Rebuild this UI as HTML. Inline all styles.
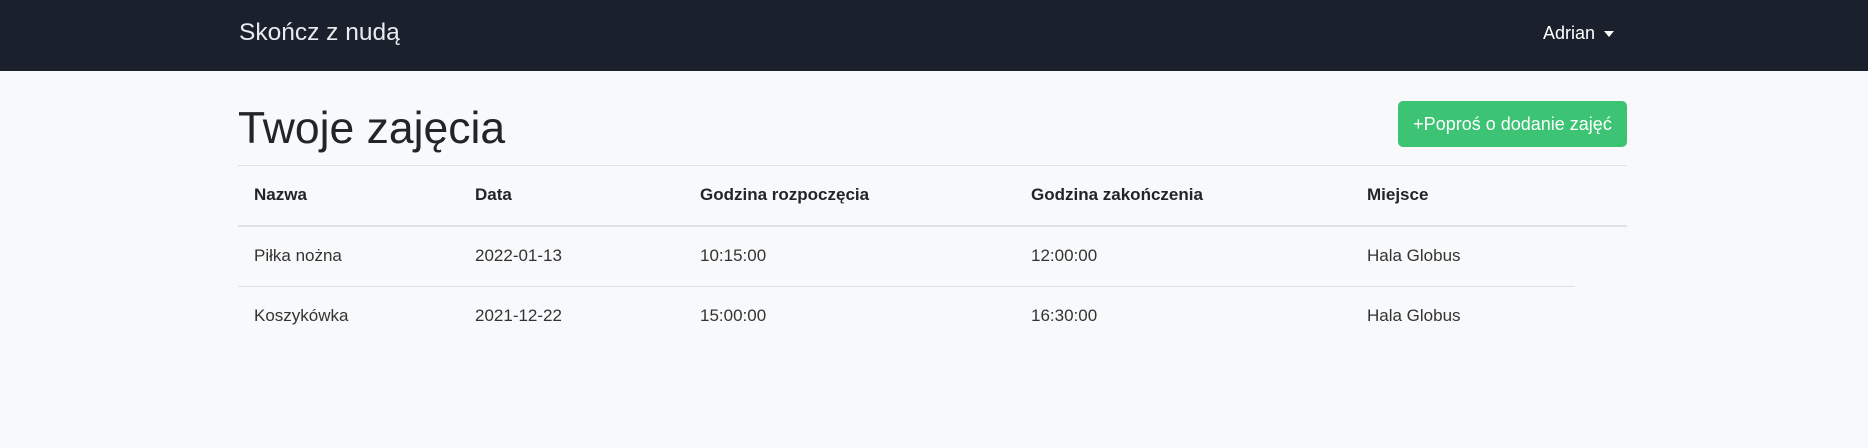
<!DOCTYPE html>
<html><head><meta charset="utf-8"><style>
*{margin:0;padding:0;box-sizing:border-box}
body{width:1868px;height:448px;background:#f8f9fa;font-family:"Liberation Sans",sans-serif;color:#212529;position:relative;overflow:hidden}
.nav{position:absolute;left:0;top:0;width:1868px;height:71px;background:#1b202d}
.t{position:absolute;white-space:nowrap;line-height:1}
.hr{position:absolute;height:1px;background:#dee2e6}
.btn{position:absolute;left:1398px;top:101px;width:229px;height:46px;background:#3cc474;border-radius:5px;color:#fff;font-size:18px;text-align:center;line-height:46px}
.th{font-weight:bold;font-size:17px;top:186px}
.r1{font-size:17px;top:247px;color:#333}
.r2{font-size:17px;top:307px;color:#333}
</style></head><body>
<div class="nav"></div>
<div class="t" style="left:239px;top:21px;font-size:24.5px;color:#e9ecef">Skończ z nudą</div>
<div class="t" style="left:1543px;top:24px;font-size:18px;color:#fff">Adrian</div>
<div style="position:absolute;left:1604px;top:31px;width:0;height:0;border-left:5px solid transparent;border-right:5px solid transparent;border-top:6px solid #fff"></div>
<div class="t" style="left:238px;top:107px;font-size:44.5px;color:#212529">Twoje zajęcia</div>
<div class="btn">+Poproś o dodanie zajęć</div>
<div class="hr" style="left:238px;top:165px;width:1389px"></div>
<div class="t th" style="left:254px">Nazwa</div>
<div class="t th" style="left:475px">Data</div>
<div class="t th" style="left:700px">Godzina rozpoczęcia</div>
<div class="t th" style="left:1031px">Godzina zakończenia</div>
<div class="t th" style="left:1367px">Miejsce</div>
<div class="hr" style="left:238px;top:225px;width:1389px;height:2px"></div>
<div class="t r1" style="left:254px">Piłka nożna</div>
<div class="t r1" style="left:475px">2022-01-13</div>
<div class="t r1" style="left:700px">10:15:00</div>
<div class="t r1" style="left:1031px">12:00:00</div>
<div class="t r1" style="left:1367px">Hala Globus</div>
<div class="hr" style="left:238px;top:286px;width:1337px"></div>
<div class="t r2" style="left:254px">Koszykówka</div>
<div class="t r2" style="left:475px">2021-12-22</div>
<div class="t r2" style="left:700px">15:00:00</div>
<div class="t r2" style="left:1031px">16:30:00</div>
<div class="t r2" style="left:1367px">Hala Globus</div>
</body></html>
